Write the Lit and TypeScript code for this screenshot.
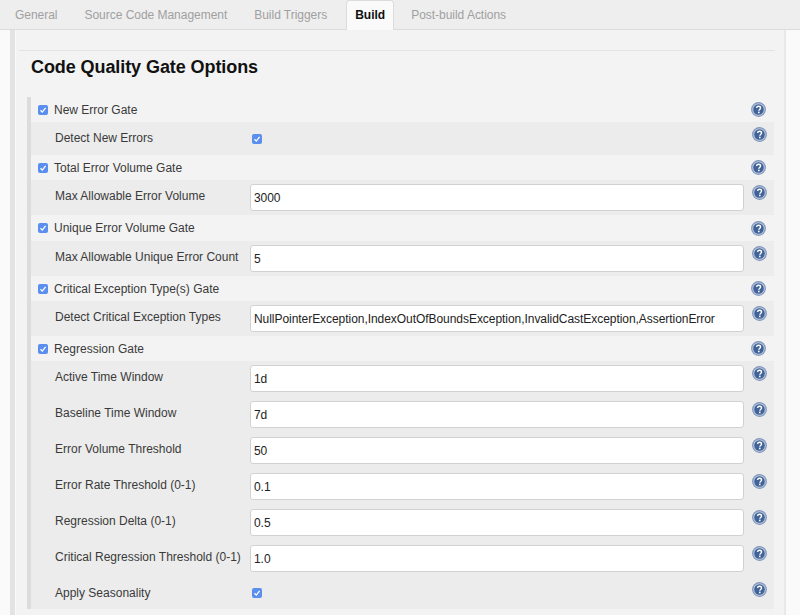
import { css, html, LitElement, nothing } from 'lit';
import { customElement } from 'lit/decorators.js';

interface Field {
  label: string;
  value?: string;
  checked?: boolean;
  height: number;
}

interface Gate {
  label: string;
  height: number;
  fields: Field[];
}

const GATES: Gate[] = [
  {
    label: 'New Error Gate',
    height: 25,
    fields: [{ label: 'Detect New Errors', checked: true, height: 33 }],
  },
  {
    label: 'Total Error Volume Gate',
    height: 25,
    fields: [{ label: 'Max Allowable Error Volume', value: '3000', height: 35 }],
  },
  {
    label: 'Unique Error Volume Gate',
    height: 26,
    fields: [{ label: 'Max Allowable Unique Error Count', value: '5', height: 35 }],
  },
  {
    label: 'Critical Exception Type(s) Gate',
    height: 25,
    fields: [
      {
        label: 'Detect Critical Exception Types',
        value: 'NullPointerException,IndexOutOfBoundsException,InvalidCastException,AssertionError',
        height: 35,
      },
    ],
  },
  {
    label: 'Regression Gate',
    height: 25,
    fields: [
      { label: 'Active Time Window', value: '1d', height: 36 },
      { label: 'Baseline Time Window', value: '7d', height: 36 },
      { label: 'Error Volume Threshold', value: '50', height: 36 },
      { label: 'Error Rate Threshold (0-1)', value: '0.1', height: 36 },
      { label: 'Regression Delta (0-1)', value: '0.5', height: 36 },
      { label: 'Critical Regression Threshold (0-1)', value: '1.0', height: 36 },
      { label: 'Apply Seasonality', checked: true, height: 32 },
    ],
  },
];

const TABS = ['General', 'Source Code Management', 'Build Triggers', 'Build', 'Post-build Actions'];

@customElement('app-root')
export class AppRoot extends LitElement {
  static styles = css`
    :host {
      display: block;
      width: 800px;
      height: 615px;
      overflow: hidden;
      background: #fafafa;
      font-family: 'Liberation Sans', Arial, sans-serif;
      font-size: 12px;
      color: #3a3a3a;
    }

    .tabs {
      display: flex;
      height: 30px;
      box-sizing: border-box;
      background: #eeeeee;
      border-bottom: 1px solid #dcdcdc;
      padding-left: 15px;
    }

    .tab {
      color: #a0a0a0;
      line-height: 30px;
      margin-right: 27px;
      letter-spacing: -0.03px;
    }

    .tab.active {
      height: 30px;
      box-sizing: border-box;
      margin: 0 17px 0 -8px;
      padding: 0 8px;
      line-height: 28px;
      color: #111;
      font-weight: bold;
      letter-spacing: 0;
      background: #fafafa;
      border: 1px solid #dcdcdc;
      border-bottom: none;
      border-radius: 4px 4px 0 0;
    }

    .page {
      width: 776px;
      height: 585px;
      box-sizing: border-box;
      margin-left: 10px;
      border-left: 5px solid #e3e3e3;
      border-right: 2px solid #e9e9e9;
      box-shadow: inset 1px 0 0 #f9f9f9;
      background: #f3f3f3;
      padding: 20px 9px 0 4px;
    }

    .rule {
      border-top: 1px solid #e3e3e3;
    }

    h2 {
      margin: 7px 0 0 12px;
      height: 39px;
      font-size: 18px;
      line-height: 19px;
      font-weight: bold;
      letter-spacing: -0.08px;
      color: #111;
    }

    .gates {
      margin-left: 8px;
      width: 747px;
      box-sizing: border-box;
      border-left: 4px solid #dcdcdc;
    }

    .gate-row {
      display: flex;
      align-items: center;
      padding: 0 8px 0 7px;
    }

    .gate-row label {
      flex: 1;
      margin-left: 6px;
    }

    .field-row {
      display: flex;
      background: #ececec;
      padding-left: 24px;
    }

    .field-label {
      width: 195px;
      flex: none;
      padding-top: 9px;
      line-height: 14px;
      white-space: nowrap;
    }

    .control {
      flex: none;
      width: 494px;
      display: flex;
      align-items: center;
    }

    .control.has-input {
      align-items: flex-start;
      padding-top: 4px;
    }

    input[type='text'] {
      width: 100%;
      height: 27px;
      box-sizing: border-box;
      padding: 1px 3px 0;
      border: 1px solid #d2d2d2;
      border-radius: 3px;
      background: #fff;
      font: 12px 'Liberation Sans', Arial, sans-serif;
      letter-spacing: -0.05px;
      color: #222;
      outline: none;
    }

    .box {
      width: 10px;
      height: 10px;
      flex: none;
      display: block;
      background: #5a8eef;
      border-radius: 2px;
    }

    .box svg {
      display: block;
    }

    .field-check {
      margin-left: 2px;
    }

    .help {
      display: block;
      width: 15px;
      height: 15px;
      flex: none;
    }

    .field-row .help {
      margin: 5px 0 0 8px;
    }
  `;

  private renderBox(extra = '') {
    return html`<span class="box ${extra}">
      <svg width="10" height="10" viewBox="0 0 10 10">
        <path d="M2.5 5.2 4.3 7.1 7.6 2.9" fill="none" stroke="#fff" stroke-width="1.3" />
      </svg>
    </span>`;
  }

  private renderHelp() {
    return html`<svg class="help" viewBox="0 0 14 14">
      <circle cx="7" cy="7" r="6.9" fill="#7f95bb" />
      <circle cx="7" cy="7" r="5.9" fill="#b9c6dc" />
      <circle cx="7" cy="7" r="4.9" fill="#41639a" />
      <path
        d="M5.2 5.6C5.3 4.5 6 4 7 4c1.1 0 1.9.6 1.9 1.6 0 1.3-1.6 1.4-1.6 2.6"
        fill="none"
        stroke="#fff"
        stroke-width="1.3"
      />
      <rect x="6.5" y="9" width="1.5" height="1.5" fill="#fff" />
    </svg>`;
  }

  private renderField(field: Field) {
    return html`<div class="field-row" style="height:${field.height}px">
      <span class="field-label">${field.label}</span>
      <div class="control ${field.value !== undefined ? 'has-input' : ''}">
        ${field.checked ? this.renderBox('field-check') : nothing}
        ${field.value !== undefined
          ? html`<input type="text" .value=${field.value} />`
          : nothing}
      </div>
      ${this.renderHelp()}
    </div>`;
  }

  private renderGate(gate: Gate) {
    return html`<div class="gate-row" style="height:${gate.height}px">
        ${this.renderBox()}
        <label>${gate.label}</label>
        ${this.renderHelp()}
      </div>
      ${gate.fields.map((f) => this.renderField(f))}`;
  }

  protected render(): unknown {
    return html`
      <nav class="tabs">
        ${TABS.map(
          (t) => html`<span class="tab ${t === 'Build' ? 'active' : ''}">${t}</span>`
        )}
      </nav>
      <main class="page">
        <div class="rule"></div>
        <h2>Code Quality Gate Options</h2>
        <section class="gates">${GATES.map((g) => this.renderGate(g))}</section>
      </main>
    `;
  }
}
